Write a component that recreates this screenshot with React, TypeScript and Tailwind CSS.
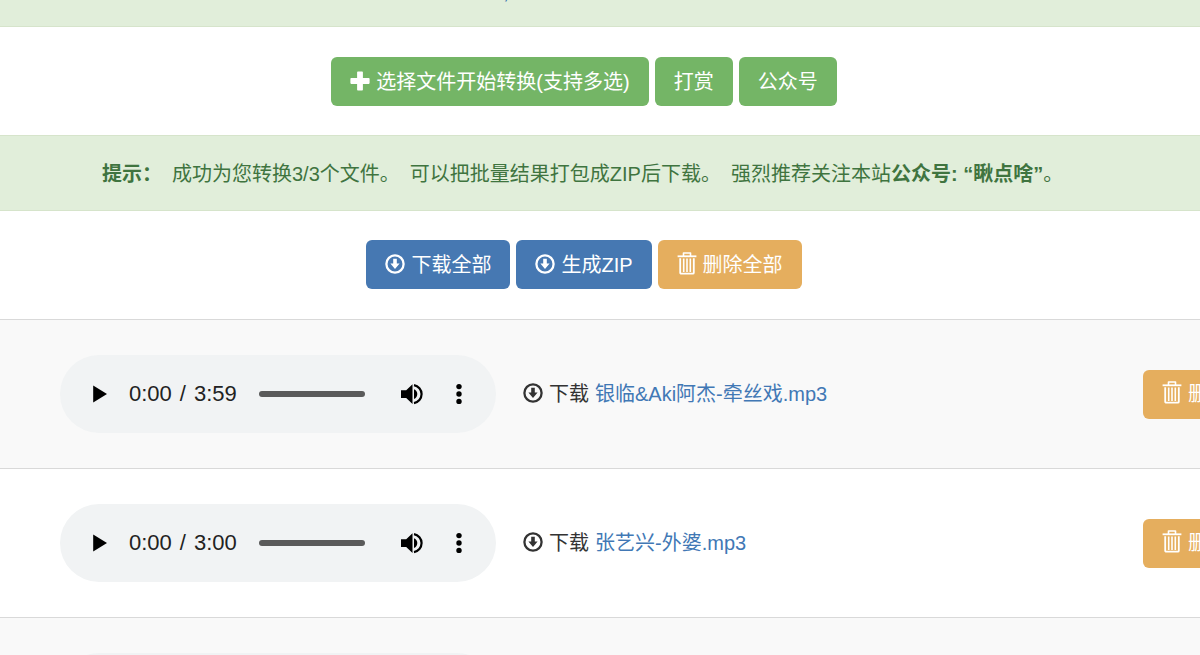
import type { ReactNode } from 'react';

type Track = { name: string; duration: string };

const tracks: Track[] = [
  { name: '银临&Aki阿杰-牵丝戏.mp3', duration: '3:59' },
  { name: '张艺兴-外婆.mp3', duration: '3:00' },
];

function PlusIcon() {
  return (
    <svg viewBox="0 0 20 20" className="mb-0.5 size-5 shrink-0" fill="currentColor" aria-hidden="true">
      <path d="M7.900 .4h4.200a.8.8 0 0 1 .8.8v5.900h5.900a.8.8 0 0 1 .8.8v4.200a.8.8 0 0 1-.8.8h-5.900v5.900a.8.8 0 0 1-.8.8H7.900a.8.8 0 0 1-.8-.8v-5.900H1.200a.8.8 0 0 1-.8-.8V7.900a.8.8 0 0 1 .8-.8h5.900V1.200a.8.8 0 0 1 .8-.8z" />
    </svg>
  );
}

function DownloadIcon() {
  return (
    <svg viewBox="0 0 20 20" className="mb-0.5 size-5 shrink-0" aria-hidden="true">
      <circle cx="10" cy="10" r="8.600" fill="none" stroke="currentColor" strokeWidth="2.300" />
      <path d="M8.200 4.800h3.600v4.800h2.800L10 15 5.400 9.600h2.800z" fill="currentColor" />
    </svg>
  );
}

function TrashIcon() {
  return (
    <svg viewBox="0 0 20 24" className="mb-1 h-6 w-5 shrink-0" fill="none" stroke="currentColor" aria-hidden="true">
      <path d="M.6 5.300h18.800" strokeWidth="1.800" />
      <path d="M6.500 5V2h7v3" strokeWidth="1.600" strokeLinejoin="round" />
      <path d="M3.200 7.200v14.500a1 1 0 0 0 1 1h11.600a1 1 0 0 0 1-1V7.200" strokeWidth="1.800" />
      <path d="M6.700 7.600v13.400M10 7.600v13.400M13.300 7.600v13.400" strokeWidth="1.600" />
    </svg>
  );
}

function Button({ tone, children }: { tone: 'green' | 'blue' | 'orange'; children: ReactNode }) {
  const tones = {
    green: 'bg-[#74b566]',
    blue: 'bg-[#4678b2]',
    orange: 'bg-[#e5ae5e]',
  };
  return (
    <button
      type="button"
      className={`flex h-[49px] shrink-0 items-center gap-1.5 whitespace-nowrap rounded-md px-[19px] text-white ${tones[tone]}`}
    >
      {children}
    </button>
  );
}

function Player({ track }: { track: Track }) {
  return (
    <div className="flex h-[78px] w-[436px] items-center rounded-full bg-[#f1f3f4] pl-8 text-black">
      <button type="button" aria-label={`播放 ${track.name}`} className="shrink-0">
        <svg viewBox="0 0 16 20" className="h-5 w-4" fill="currentColor" aria-hidden="true">
          <path d="M1.200 1.500v17L15 10z" />
        </svg>
      </button>
      <span className="ml-[21px] flex gap-2 whitespace-nowrap text-[22px] text-[#222]">
        <span>0:00</span>
        <span>/</span>
        <span>{track.duration}</span>
      </span>
      <input
        type="range"
        min={0}
        max={100}
        defaultValue={0}
        aria-label={`进度 ${track.name}`}
        className="ml-[22px] h-1.5 w-[106px] appearance-none rounded-full bg-[#5a5a5a] [&::-webkit-slider-thumb]:appearance-none"
      />
      <button type="button" aria-label="静音" className="ml-[34px] shrink-0">
        <svg viewBox="0 0 26 24" className="h-6 w-[26px]" fill="currentColor" aria-hidden="true">
          <path d="M2 8.300v7.600h5.200l6.300 6V2.200l-6.300 6.100z" />
          <path d="M15 7.200c2.100.8 3.300 2.700 3.300 4.900s-1.200 4.100-3.300 5z" />
          <path d="M15 3.100c4.300.8 7.600 4.500 7.600 9s-3.300 8.200-7.600 9" fill="none" stroke="currentColor" strokeWidth="2.200" />
        </svg>
      </button>
      <button type="button" aria-label="更多选项" className="ml-[22px] shrink-0">
        <svg viewBox="0 0 24 24" className="size-6" fill="currentColor" aria-hidden="true">
          <circle cx="12" cy="4.600" r="2.700" />
          <circle cx="12" cy="12" r="2.700" />
          <circle cx="12" cy="19.400" r="2.700" />
        </svg>
      </button>
    </div>
  );
}

export default function App() {
  return (
    <main className="h-screen overflow-hidden bg-white font-['Liberation_Sans','Noto_Sans_CJK_SC',sans-serif] text-[20px] leading-7 text-[#333]">
      <div className="flex h-[27px] items-end justify-center overflow-hidden border-b border-[#d6e4cb] bg-[#e1eeda] pb-5 pr-[188px] text-[#3a6fae]">
        <span>,</span>
      </div>

      <div className="flex justify-center gap-1.5 pb-[29px] pr-8 pt-[30px]">
        <Button tone="green">
          <PlusIcon />
          选择文件开始转换(支持多选)
        </Button>
        <Button tone="green">打赏</Button>
        <Button tone="green">公众号</Button>
      </div>

      <div className="flex gap-2.5 whitespace-nowrap border-y border-[#d6e4cb] bg-[#e1eeda] pb-[22px] pl-[102px] pt-6 text-[#3f743f]">
        <strong>提示：</strong>
        <span>成功为您转换3/3个文件。</span>
        <span>可以把批量结果打包成ZIP后下载。</span>
        <span>
          强烈推荐关注本站<strong>公众号: “瞅点啥”</strong>。
        </span>
      </div>

      <div className="flex justify-center gap-1.5 pb-[30px] pr-8 pt-[29px]">
        <Button tone="blue">
          <DownloadIcon />
          下载全部
        </Button>
        <Button tone="blue">
          <DownloadIcon />
          生成ZIP
        </Button>
        <Button tone="orange">
          <TrashIcon />
          删除全部
        </Button>
      </div>

      <table className="w-full min-w-[1300px] border-collapse">
        <tbody>
          {tracks.map((track) => (
            <tr key={track.name} className="border-t border-[#d9d9d9] odd:bg-[#f9f9f9]">
              <td className="w-[523px] py-[35px] pl-[60px]">
                <Player track={track} />
              </td>
              <td>
                <div className="flex items-center gap-1.5 whitespace-nowrap">
                  <DownloadIcon />
                  <span>下载</span>
                  <a href="#" className="text-[#4178b5]">
                    {track.name}
                  </a>
                </div>
              </td>
              <td className="w-[157px]">
                <Button tone="orange">
                  <TrashIcon />
                  删除
                </Button>
              </td>
            </tr>
          ))}
          <tr className="border-t border-[#d9d9d9] odd:bg-[#f9f9f9]">
            <td colSpan={3} className="py-[35px] pl-[60px]">
              <div className="h-[78px] w-[436px] rounded-full bg-[#f1f3f4]" />
            </td>
          </tr>
        </tbody>
      </table>
    </main>
  );
}
